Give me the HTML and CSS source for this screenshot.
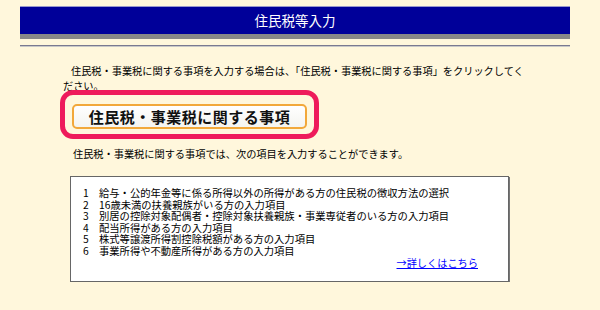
FILE: index.html
```html
<!DOCTYPE html>
<html lang="ja">

<head>
  <meta charset="UTF-8">
  <title>住民税等入力</title>
  <link rel="stylesheet" href="styles.css">
</head>

<body>
  <div class="page">
    <div class="title-bar">住民税等入力</div>
    <div class="rule"></div>

    <div class="content">
      <p class="lead">住民税・事業税に関する事項を入力する場合は、「住民税・事業税に関する事項」をクリックしてください。</p>

      <div class="highlight">
        <button class="main-button">住民税・事業税に関する事項</button>
      </div>

      <p class="note">住民税・事業税に関する事項では、次の項目を入力することができます。</p>

      <!-- 入力項目の一覧 -->
      <div class="item-box">
        <ol class="item-list">
          <li><span class="num">1</span>給与・公的年金等に係る所得以外の所得がある方の住民税の徴収方法の選択</li>
          <li><span class="num">2</span>16歳未満の扶養親族がいる方の入力項目</li>
          <li><span class="num">3</span>別居の控除対象配偶者・控除対象扶養親族・事業専従者のいる方の入力項目</li>
          <li><span class="num">4</span>配当所得がある方の入力項目</li>
          <li><span class="num">5</span>株式等譲渡所得割控除税額がある方の入力項目</li>
          <li><span class="num">6</span>事業所得や不動産所得がある方の入力項目</li>
        </ol>
        <div class="more"><a href="#">→詳しくはこちら</a></div>
      </div>
    </div>
  </div>
</body>

</html>
```

FILE: styles.css
```css
body {
  background-color: #FFF7DC;
  color: #000;
  font-family: "Noto Sans CJK JP", "Noto Sans", sans-serif;
  font-size: 10.2px;
  margin: 0;
  padding: 0;
}

.page {
  width: 550px;
  padding: 6px 0 0 20px;
}

.title-bar {
  background-color: #000099;
  color: white;
  text-align: center;
  height: 27px;
  line-height: 26px;
  font-size: 13.5px;
  border-top: 1px solid #9999cc;
  border-bottom: 5px solid #888;
}

.rule {
  margin-top: 6px;
  border-top: 1px solid #7a7a90;
  border-bottom: 1px solid #c8c8c8;
}

.content {
  padding-left: 40px;
}

.lead {
  margin: 16px 0 0 3px;
  width: 470px;
  text-indent: 8px;
  line-height: 15px;
}

.highlight {
  display: inline-block;
  margin-top: -3px;
  padding: 9px 7px 5px;
  border: 5px solid #EE1B5B;
  border-radius: 13px;
  background-color: #FFF7DC;
}

.main-button {
  display: block;
  width: 235px;
  height: 25px;
  padding: 0;
  border: 2px solid #F2A83A;
  border-radius: 5px;
  background: linear-gradient(#ffffff, #f4f4f0);
  color: #111;
  font-family: "Noto Sans CJK JP", sans-serif;
  font-size: 15px;
  font-weight: bold;
  letter-spacing: 0.5px;
  line-height: 20px;
  cursor: pointer;
}

.note {
  margin: 8px 0 0 13px;
  line-height: 14px;
}

.item-box {
  width: 437px;
  margin: 15px 0 0 10px;
  padding: 10px 0 11px;
  background-color: white;
  border: 1px solid #666;
  box-shadow: 1px 1px 0 #777;
}

.item-list {
  list-style: none;
  margin: 0;
  padding: 0 0 0 12px;
  font-size: 10.3px;
  line-height: 11.5px;
}

.item-list .num {
  display: inline-block;
  width: 16px;
}

.more {
  text-align: right;
  padding-right: 30px;
  line-height: 14px;
}

.more a {
  color: #0000ff;
}
```
